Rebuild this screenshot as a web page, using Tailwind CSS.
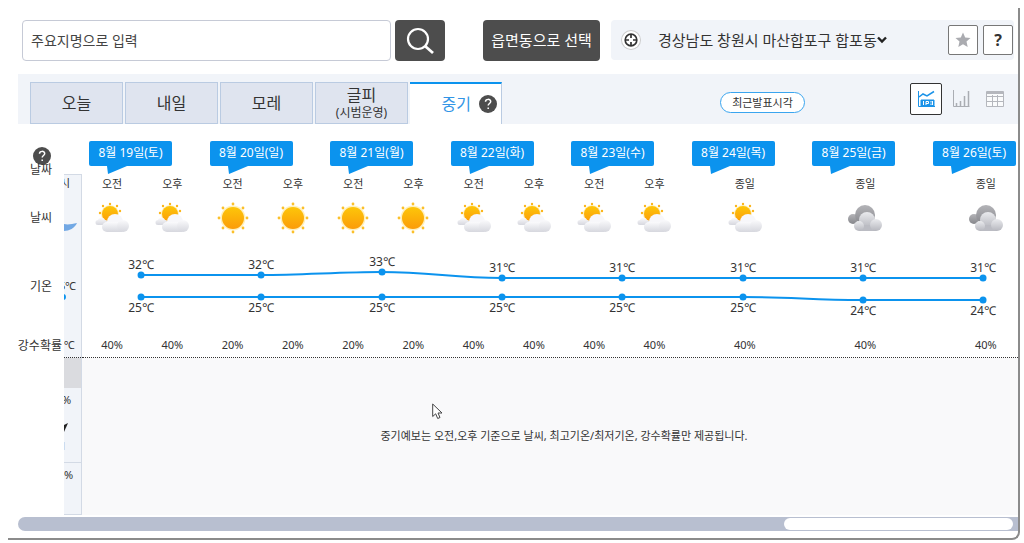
<!DOCTYPE html>
<html lang="ko">
<head>
<meta charset="utf-8">
<meta name="viewport" content="width=device-width, initial-scale=1">
<title>중기예보</title>
<script src="https://cdn.jsdelivr.net/npm/@tailwindcss/browser@4"></script>
</head>
<body class="bg-white font-['Noto_Sans','Noto_Sans_CJK_KR',sans-serif] text-[#333]">
<svg class="absolute size-0" aria-hidden="true">
  <defs>
    <linearGradient id="gSun" x1="0" y1="0" x2="0" y2="1"><stop offset="0" stop-color="#fdc60a"/><stop offset="1" stop-color="#fb9c08"/></linearGradient>
    <linearGradient id="gCloud" x1="0" y1="0" x2="0" y2="1"><stop offset="0" stop-color="#fafafc"/><stop offset="1" stop-color="#d6d7de"/></linearGradient>
    <linearGradient id="gDark" x1="0" y1="0" x2="0" y2="1"><stop offset="0" stop-color="#b4b4b8"/><stop offset="1" stop-color="#85868b"/></linearGradient>
    <linearGradient id="gMid" x1="0" y1="0" x2="0" y2="1"><stop offset="0" stop-color="#eaebee"/><stop offset="1" stop-color="#b6b7be"/></linearGradient>
    <symbol id="sunny" viewBox="0 0 36 34">
      <circle cx="18" cy="17" r="12.500" fill="#fff1bd"/>
      <circle cx="18" cy="17" r="11" fill="url(#gSun)"/>
      <g fill="#fbc02a"><circle cx="18" cy="3" r="1.400"/><circle cx="18" cy="31" r="1.400"/><circle cx="4" cy="17" r="1.400"/><circle cx="32" cy="17" r="1.400"/><circle cx="8" cy="7" r="1.400"/><circle cx="28" cy="7" r="1.400"/><circle cx="8" cy="27" r="1.400"/><circle cx="28" cy="27" r="1.400"/></g>
    </symbol>
    <symbol id="partly" viewBox="0 0 36 34">
      <circle cx="16" cy="13" r="9" fill="#fff1bd"/>
      <circle cx="16" cy="13" r="8" fill="url(#gSun)"/>
      <g fill="#fbb51a"><circle cx="16" cy="3" r="1.200"/><circle cx="9" cy="5" r="1.200"/><circle cx="23" cy="5" r="1.200"/><circle cx="6" cy="12" r="1.200"/><circle cx="26" cy="10" r="1.200"/><circle cx="8" cy="19" r="1.200"/></g>
      <path d="M4 24a2.500 2.500 0 0 1 0-5c1-3 6-3 7 0 4 0 4 5 1 5Z" fill="url(#gCloud)"/>
      <circle cx="21" cy="21" r="8" fill="#f7f7fa"/>
      <path d="M13 31a5 5 0 0 1 0-10h15v10Z" fill="url(#gCloud)"/>
      <circle cx="29" cy="25" r="6" fill="url(#gCloud)"/>
    </symbol>
    <symbol id="cloudy" viewBox="0 0 36 34">
      <circle cx="6" cy="18" r="5" fill="url(#gDark)"/>
      <circle cx="18" cy="14" r="10" fill="url(#gDark)"/>
      <circle cx="20" cy="19" r="8" fill="url(#gMid)"/>
      <path d="M12 30v-6h17v6Z" fill="#bbbcc3"/>
      <circle cx="29" cy="24" r="6" fill="url(#gMid)"/>
      <circle cx="12" cy="25" r="5" fill="url(#gMid)"/>
    </symbol>
    <symbol id="help" viewBox="0 0 18 18"><circle cx="9" cy="9" r="9" fill="#4d4d4d"/><path d="M6.500 6.800c0-3.200 5.200-3.200 5.200-.2 0 1.900-2.500 2-2.500 4M9.200 12.400v1.600" fill="none" stroke="#fff" stroke-width="1.500"/></symbol>
  </defs>
</svg>

<main class="mt-2 mr-1 ml-2 rounded-br-lg border-r-2 border-b-2 border-[#8b8b8b] pt-3 pb-[7px]">
  <header class="flex h-[41px] items-stretch pr-1 pl-[14px] text-[15px]">
    <form class="flex w-[423px] shrink-0 gap-1" onsubmit="return false">
      <input type="text" aria-label="지명 검색" placeholder="주요지명으로 입력" class="min-w-0 grow rounded border border-[#c6cad6] px-2 text-sm placeholder:text-[#444]">
      <button aria-label="검색" class="flex w-[50px] items-center justify-center rounded-sm bg-[#4d4d4d]">
        <svg class="size-7" viewBox="0 0 28 28" fill="none" stroke="#fff" stroke-width="2.200"><circle cx="12" cy="12" r="10"/><path d="m19 19 8 7" stroke-width="2.800"/></svg>
      </button>
    </form>
    <button class="ml-[38px] w-[117px] shrink-0 rounded-sm bg-[#4d4d4d] text-[15px] whitespace-nowrap text-white">읍면동으로 선택</button>
    <div class="ml-[11px] flex h-10 grow items-center rounded bg-[#f1f4f9] pr-px">
      <button aria-label="현재 위치" class="ml-[11px] flex size-[18px] items-center justify-center rounded-full bg-white ring-1 ring-[#ccc]">
        <svg class="size-[14px]" viewBox="0 0 14 14" fill="none" stroke="#333" stroke-width="1.700"><circle cx="7" cy="7" r="5.800"/><path d="M7 1v4M7 9v4M1 7h4M9 7h4"/></svg>
      </button>
      <button class="ml-[18px] flex items-center whitespace-nowrap">경상남도 창원시 마산합포구 합포동
        <svg class="h-2 w-[10px]" viewBox="0 0 10 8" fill="none" stroke="#222" stroke-width="2.400"><path d="m1 1.500 4 4 4-4"/></svg></button>
      <button aria-label="즐겨찾기" class="ml-auto flex size-[30px] items-center justify-center rounded-xs border border-[#777] bg-white">
        <svg class="size-4" viewBox="0 0 16 16" fill="#aaabb0"><path d="m8 .5 2.200 5 5.300.5-4 3.600 1.200 5.400L8 12.200 3.300 15l1.200-5.400-4-3.600 5.300-.5Z"/></svg>
      </button>
      <button aria-label="도움말" class="ml-[5px] size-[30px] rounded-xs border border-[#777] bg-white text-base font-bold">?</button>
    </div>
  </header>

  <nav class="mt-[13px] ml-[10px] flex h-[50px] items-end gap-[2px] bg-[#f1f4f9] pl-3 text-base">
    <button class="h-[42px] w-[93px] border border-[#bacbe2] bg-[#dfe4ef]">오늘</button>
    <button class="h-[42px] w-[93px] border border-[#bacbe2] bg-[#dfe4ef]">내일</button>
    <button class="h-[42px] w-[93px] border border-[#bacbe2] bg-[#dfe4ef]">모레</button>
    <button class="h-[42px] w-[93px] border border-[#bacbe2] bg-[#dfe4ef] leading-5">글피<span class="block text-xs leading-4">(시범운영)</span></button>
    <button class="flex h-[42px] w-[92px] items-center justify-end gap-2 border-t-2 border-r border-t-[#0b93ee] border-r-[#bacbe2] bg-white pr-1 text-[#3295e6]">중기
      <svg class="size-[18px]"><use href="#help"/></svg></button>
    <button class="mr-[103px] mb-[11px] ml-auto h-[21px] w-[85px] rounded-full border border-[#3aa5ef] bg-white text-[11px] leading-4 text-[#333]">최근발표시각</button>
    <div class="mr-[14px] mb-[9px] flex items-center">
      <button aria-label="그래프" class="flex size-8 items-center justify-center rounded-xs border border-[#333] bg-white">
        <svg class="size-[18px]" viewBox="0 0 18 18" fill="none" stroke="#1b93e8"><path d="M1.500 1v15.500H18"/><path d="m2 7 4-3 4 2 7-4.500" stroke-width="1.500"/><path d="M4 10h13v6H4Z" fill="#1b93e8"/><path d="M6.500 11v4M9 15v-3.500h2.500v2H9M14 11v1.500M14 13.500V15M15.500 11v4" stroke="#fff"/></svg>
      </button>
      <button aria-label="막대 그래프" class="ml-[10px]"><svg class="size-[18px]" viewBox="0 0 18 18" fill="none" stroke="#aaadb3"><path d="M1.500 0v16.500H17.500"/><path d="M4.500 16v-3M8.500 16v-5M12.500 16V6M16.500 16V1" stroke-width="1.500"/></svg></button>
      <button aria-label="표" class="ml-4"><svg class="size-[18px]" viewBox="0 0 18 18" fill="none" stroke="#b5b7bd"><path d="M.5 1.500h17v15H.5ZM1 6.500h16M1 11.500h16M6.500 5v11M11.500 5v11" fill="#fafbfc"/><path d="M1 3h16" stroke-width="2"/></svg></button>
    </div>
  </nav>

  <section class="flex h-[391px] text-[11px]">
    <div class="flex w-14 shrink-0 flex-col items-end pt-[23px] text-xs leading-4 whitespace-nowrap">
      <button aria-label="도움말" class="mr-[13px]"><svg class="size-[18px]"><use href="#help"/></svg></button>
      <span class="-mt-[3px] mr-3">날짜</span>
      <span class="mt-8 mr-3">날씨</span>
      <span class="mt-[53px] mr-3">기온</span>
      <span class="mt-[43px] mr-0.5">강수확률</span>
    </div>
    <div class="mt-[50px] flex w-[18px] shrink-0 flex-col overflow-hidden border-t border-r border-b border-[#d3dae5] bg-[#f1f4f9] whitespace-nowrap">
      <div class="flex h-[183px] flex-col border-b border-dotted border-[#333] leading-4">
        <span class="-ml-1">시</span>
        <svg class="mt-[31px] h-[10px] w-[14px] shrink-0" viewBox="0 0 14 10"><path d="M0 2c4 1 8 0 13-1-2 5-8 8-13 8Z" fill="#72a8e4"/></svg>
        <span class="mt-[46px] -ml-[5px]">5℃</span>
        <svg class="h-[6px] w-1 shrink-0" viewBox="0 0 4 6"><circle cx="-1" cy="3" r="3" fill="#0b93ee"/></svg>
        <span class="mt-auto mb-1">℃</span>
      </div>
      <div class="h-[30px] bg-[#dadbdf]"></div>
      <div class="h-[75px] border-b border-[#d3dae5] pt-1 leading-4">
        <span class="-ml-0.5 block">%</span>
        <svg class="mt-[15px] h-7 w-1" viewBox="0 0 4 28"><path d="M0 2 4 0 0 9Z" fill="#222"/><path d="M0 19h1v8H0Z" fill="#cbdcf0"/></svg>
      </div>
      <div class="pt-1 leading-4">%</div>
    </div>

    <div class="flex min-w-0 grow flex-col overflow-hidden">
      <div class="flex h-[234px] w-[103%] shrink-0 flex-col border-b border-dotted border-[#333] pt-[17px]">
        <ol id="dates" class="grid grid-cols-8"></ol>
        <svg class="mt-[9px] block w-full" viewBox="0 0 964 84" role="img" aria-label="최고기온과 최저기온">
          <g fill="none" stroke="#0b93ee" stroke-width="2">
            <path d="M59 31H179C219 31 259 28 299 28C350 28 370 34 420 34H901"/>
            <path d="M59 53H660C710 53 730 56 780 56H901"/>
          </g>
          <g id="temps" fill="#333" font-size="12" text-anchor="middle"></g>
        </svg>
        <ol id="rain" class="mt-auto mb-1 grid grid-cols-8 text-center leading-4"></ol>
      </div>
      <div class="h-[157px] bg-[#f9f9fa] pt-[70px] pl-7 text-center text-[11px] leading-4">
        <p>중기예보는 오전,오후 기준으로 날씨, 최고기온/최저기온, 강수확률만 제공됩니다.</p>
      </div>
    </div>
  </section>

  <div class="mt-0.5 ml-[10px] flex h-[14px] justify-end rounded-l-full bg-[#b8bfd0] py-px pr-[5px]" role="scrollbar" aria-label="가로 스크롤" aria-controls="dates" aria-valuenow="100">
    <div class="w-[23%] rounded-full bg-white"></div>
  </div>
</main>

<svg class="pointer-events-none absolute top-[403px] left-[432px] h-[17px] w-[11px]" viewBox="0 0 11 17" aria-hidden="true"><path d="M.7 1v12.500l3-2.700 2 4.700 2.300-1-2-4.500h4Z" fill="#fff" stroke="#444"/></svg>

<script>
const days = [
  ['19일(토)', ['partly', 'partly'], [40, 40], 32, 25],
  ['20일(일)', ['sunny', 'sunny'], [20, 20], 32, 25],
  ['21일(월)', ['sunny', 'sunny'], [20, 20], 33, 25],
  ['22일(화)', ['partly', 'partly'], [40, 40], 31, 25],
  ['23일(수)', ['partly', 'partly'], [40, 40], 31, 25],
  ['24일(목)', ['partly'], [40], 31, 25],
  ['25일(금)', ['cloudy'], [40], 31, 24],
  ['26일(토)', ['cloudy'], [40], 31, 24]
];
const hiY = { 31: 34, 32: 31, 33: 28 }, loY = { 25: 53, 24: 56 };
let dates = '', rain = '', temps = '';
days.forEach(([d, icons, pct, hi, lo], i) => {
  const halves = icons.map((ic, k) => `<div class="flex flex-1 flex-col items-center"><span class="leading-4">${icons.length < 2 ? '종일' : k ? '오후' : '오전'}</span><svg class="mt-[9px] h-[34px] w-9"><use href="#${ic}"/></svg></div>`).join('');
  dates += `<li><div class="ml-[7px] w-[83px]"><div class="h-[25px] rounded-xs bg-[#0b93ee] text-center text-xs leading-6 whitespace-nowrap text-white">8월 ${d}</div><svg class="ml-[18px] h-2 w-5" viewBox="0 0 20 8"><path d="M0 0h20L1 8Z" fill="#0b93ee"/></svg></div><div class="mt-[2px] flex">${halves}</div></li>`;
  rain += `<li class="flex">${pct.map(p => `<span class="flex-1">${p}%</span>`).join('')}</li>`;
  const x = Math.round(59 + i * 120.3);
  temps += `<circle cx="${x}" cy="${hiY[hi]}" r="3.500" fill="#0b93ee"/><circle cx="${x}" cy="${loY[lo]}" r="3.500" fill="#0b93ee"/><text x="${x}" y="${hiY[hi] - 6}">${hi}℃</text><text x="${x}" y="${loY[lo] + 15}">${lo}℃</text>`;
});
document.getElementById('dates').innerHTML = dates;
document.getElementById('rain').innerHTML = rain;
document.getElementById('temps').innerHTML = temps;
</script>
</body>
</html>
